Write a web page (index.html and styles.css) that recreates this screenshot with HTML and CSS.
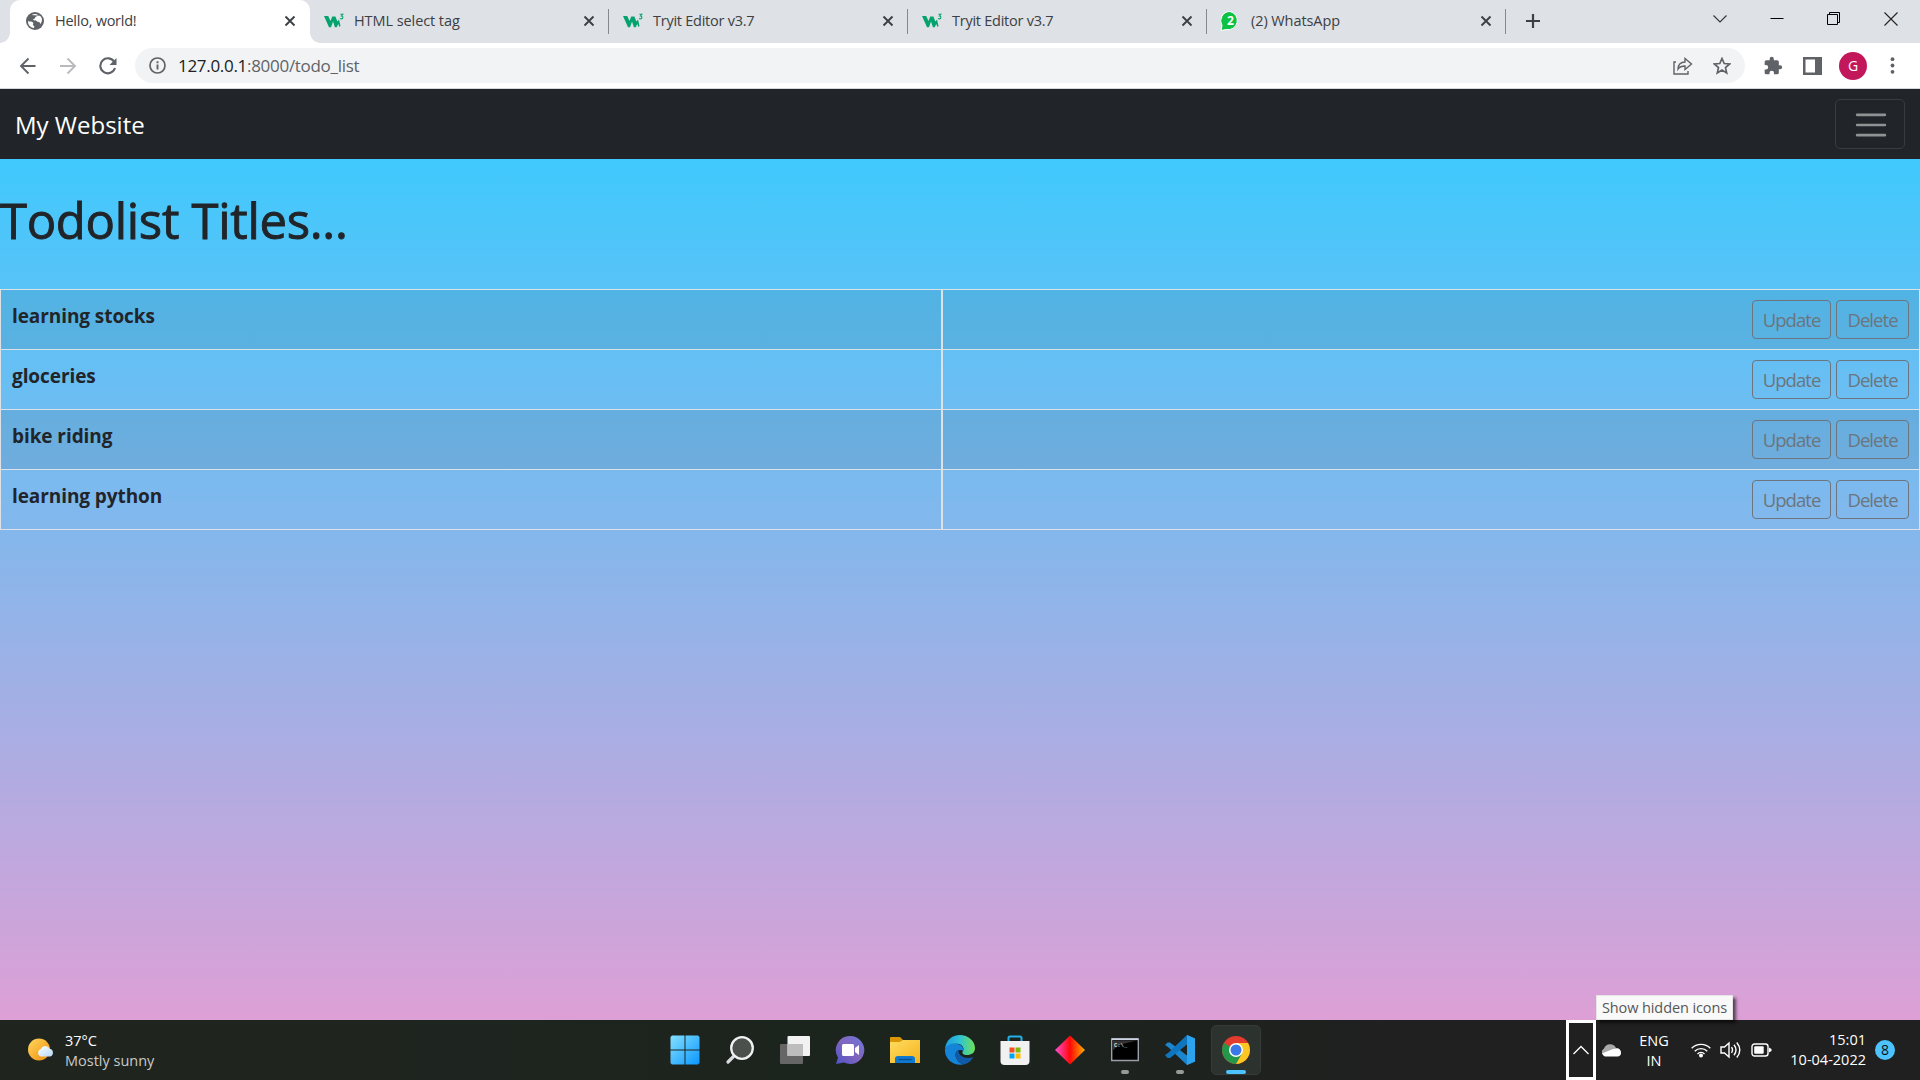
FILE: index.html
```html
<!DOCTYPE html>
<html lang="en">
<head>
<meta charset="utf-8">
<title>Hello, world!</title>
<link rel="stylesheet" href="styles.css">
</head>
<body>
<svg width="0" height="0" class="defs" aria-hidden="true">
  <defs>
    <symbol id="close" viewBox="0 0 12 12"><path d="M1.500 1.500l9 9m0-9l-9 9" stroke="#3c4043" stroke-width="1.900" fill="none"/></symbol>
    <symbol id="w3" viewBox="0 0 20 16"><path d="M0 3h4.200l2.300 5 1.700-4.500h3.200l2 5L15 6.500l1.500 6.500-1 1-1.300-3-1.400 3.200h-1.900L9 8.500 7 14.200H5z" fill="#04a36d"/><path d="M16.400 1.200h2.500L17.500 3c1.900.1 1.900 2.900-.1 2.900-.7 0-1-.3-1.200-.7" fill="none" stroke="#04a36d" stroke-width="1.100"/></symbol>
  </defs>
</svg>

<div class="tabstrip">
  <div class="tab tab-active">
    <svg class="globe" viewBox="0 0 18 18"><circle cx="9" cy="9" r="9" fill="#5f6368"/><path d="M2 9c1 1 4 0 5 1.500s-1 2 .5 3 .5 2 .5 2.600C4 15.500 1.800 12.500 2 9zM5.500 3C7.500 1.600 10 1.700 11.500 2.400c.5 1.600-.8 1.800-1.800 2.400s0 1.700-1.400 1.900-1.500 1.300-.3 1.500 2.600.3 3.200 1.400 2.300 0 2.800 1.400-.8 2-1.200 2.600c4-3 4-7.500 1.200-9.800" fill="#fff"/></svg>
    <span class="tab-title">Hello, world!</span>
    <svg class="tab-close"><use href="#close"/></svg>
  </div>
  <div class="tab">
    <svg class="w3"><use href="#w3"/></svg>
    <span class="tab-title tab-title-wide">HTML select tag</span>
    <svg class="tab-close"><use href="#close"/></svg>
  </div>
  <div class="tab tab-sep">
    <svg class="w3"><use href="#w3"/></svg>
    <span class="tab-title">Tryit Editor v3.7</span>
    <svg class="tab-close"><use href="#close"/></svg>
  </div>
  <div class="tab tab-sep">
    <svg class="w3"><use href="#w3"/></svg>
    <span class="tab-title">Tryit Editor v3.7</span>
    <svg class="tab-close"><use href="#close"/></svg>
  </div>
  <div class="tab tab-sep">
    <svg class="wa" viewBox="0 0 20 20"><path d="M10 .5a9 9 0 1 1-3.800 18L1 19.500l1-5A9.300 9.300 0 0 1 10 .5z" fill="#0dc143" stroke="#fff" stroke-width="1"/><text x="10.500" y="14.200" text-anchor="middle" class="wa-num">2</text></svg>
    <span class="tab-title tab-title-wide">(2) WhatsApp</span>
    <svg class="tab-close"><use href="#close"/></svg>
  </div>
  <div class="newtab">
    <svg width="16" height="16" viewBox="0 0 16 16"><path d="M8 1v14M1 8h14" stroke="#3c4043" stroke-width="2.200"/></svg>
  </div>
  <div class="window-buttons">
    <svg width="14" height="14" viewBox="0 0 14 14"><path d="M.5 3.500L7 10l6.500-6.500" fill="none" stroke="#333" stroke-width="1.100"/></svg>
    <svg width="14" height="14" viewBox="0 0 14 14"><path d="M.5 6.500h13" stroke="#000" stroke-width="1"/></svg>
    <svg width="14" height="14" viewBox="0 0 14 14"><path d="M.5 2.500h10v10h-10zM2.500 2.500V.5h10v10h-2" fill="none" stroke="#000" stroke-width="1"/></svg>
    <svg width="14" height="14" viewBox="0 0 14 14"><path d="M.5.5l13 13m0-13l-13 13" stroke="#222" stroke-width="1.100"/></svg>
  </div>
</div>

<div class="toolbar">
  <div class="nav-buttons">
    <svg width="18" height="18" viewBox="0 0 18 18"><path d="M16.500 9H2m7.500-7.500L2 9l7.500 7.500" fill="none" stroke="#5f6368" stroke-width="1.900"/></svg>
    <svg width="18" height="18" viewBox="0 0 18 18"><path d="M1 9h15M8.500 1.500L16 9l-7.500 7.500" fill="none" stroke="#bababd" stroke-width="1.900"/></svg>
    <svg width="18" height="18" viewBox="0 0 18 18"><path d="M15.300 5A7.500 7.500 0 1 0 16 11" fill="none" stroke="#5f6368" stroke-width="2.100"/><path d="M17.500 1v7h-7z" fill="#5f6368"/></svg>
  </div>
  <div class="omnibox">
    <svg width="17" height="17" viewBox="0 0 17 17"><circle cx="8.500" cy="8.500" r="7.500" fill="none" stroke="#5f6368" stroke-width="1.700"/><path d="M8.500 7.500v5M8.500 4.300v1.900" stroke="#5f6368" stroke-width="1.900"/></svg>
    <span class="url"><b>127.0.0.1</b>:8000/todo_list</span>
    <svg class="share" width="20" height="18" viewBox="0 0 20 18"><path d="M3 5H1v12h14v-3" fill="none" stroke="#5f6368" stroke-width="1.400"/><path d="M5 12c.3-4.500 3-7 7-7V1.500l6.500 5.500L12 12.500V9c-3.500 0-5.500 1-7 3z" fill="none" stroke="#5f6368" stroke-width="1.400"/></svg>
    <svg class="star" width="18" height="18" viewBox="0 0 18 18"><path d="M9 1.500l2.200 5 5.400.5-4.100 3.600 1.200 5.300L9 13.100l-4.700 2.800 1.200-5.300L1.400 7l5.400-.5z" fill="none" stroke="#5f6368" stroke-width="1.700"/></svg>
  </div>
  <div class="actions">
    <svg width="20" height="20" viewBox="0 0 24 24"><path d="M20.500 11H19V7a2 2 0 0 0-2-2h-4V3.500a2.500 2.500 0 0 0-5 0V5H4a2 2 0 0 0-2 2v3.800h1.500a2.700 2.700 0 0 1 0 5.400H2V20a2 2 0 0 0 2 2h3.800v-1.500a2.700 2.700 0 0 1 5.400 0V22H17a2 2 0 0 0 2-2v-4h1.500a2.500 2.500 0 0 0 0-5z" fill="#5f6368"/></svg>
    <svg width="19" height="18" viewBox="0 0 19 18"><path d="M0 0h19v18H0zM2.500 2.500v13H12v-13z" fill="#5f6368" fill-rule="evenodd"/></svg>
    <span class="avatar">G</span>
    <svg width="5" height="17" viewBox="0 0 5 17"><circle cx="2.500" cy="2.200" r="1.900" fill="#5f6368"/><circle cx="2.500" cy="8.500" r="1.900" fill="#5f6368"/><circle cx="2.500" cy="14.800" r="1.900" fill="#5f6368"/></svg>
  </div>
</div>

<main class="page">
  <nav class="navbar">
    <span class="brand">My Website</span>
    <span class="toggler"><svg width="38" height="38" viewBox="0 0 30 30"><path d="M4 7h22M4 15h22M4 23h22" stroke="#919294" stroke-linecap="round" stroke-width="2"/></svg></span>
  </nav>
  <div class="content">
    <h1 class="heading"><span>Todolist Titles...</span></h1>
    <div class="table">
      <div class="row"><div class="cell"><span>learning stocks</span></div><div class="cell cell-actions"><span class="btn btn-u">Update</span><span class="btn btn-d">Delete</span></div></div>
      <div class="row"><div class="cell"><span>gloceries</span></div><div class="cell cell-actions"><span class="btn btn-u">Update</span><span class="btn btn-d">Delete</span></div></div>
      <div class="row"><div class="cell"><span>bike riding</span></div><div class="cell cell-actions"><span class="btn btn-u">Update</span><span class="btn btn-d">Delete</span></div></div>
      <div class="row"><div class="cell"><span>learning python</span></div><div class="cell cell-actions"><span class="btn btn-u">Update</span><span class="btn btn-d">Delete</span></div></div>
    </div>
  </div>
</main>

<footer class="taskbar">
  <div class="weather">
    <svg width="27" height="26" viewBox="0 0 27 26"><defs><linearGradient id="sun" x1="0" y1="0" x2="1" y2="1"><stop offset="0" stop-color="#ffd95e"/><stop offset="1" stop-color="#f08a0c"/></linearGradient><linearGradient id="cl" x1="0" y1="0" x2="1" y2="1"><stop offset="0" stop-color="#fff"/><stop offset="1" stop-color="#b5d8f5"/></linearGradient></defs><circle cx="12" cy="12.500" r="11" fill="url(#sun)"/><path d="M13.500 19.500a4 4 0 0 1 .3-7.500 5 5 0 0 1 9-.2 4 4 0 0 1 .4 7.700z" fill="url(#cl)"/></svg>
    <div class="weather-text"><span>37°C</span><span class="cond">Mostly sunny</span></div>
  </div>
  <div class="apps">
    <div class="app"><svg width="30" height="30" viewBox="0 0 30 30"><defs><linearGradient id="win" x1="0" y1="0" x2="1" y2="1"><stop offset="0" stop-color="#85e0ff"/><stop offset="1" stop-color="#0a97ff"/></linearGradient></defs><path d="M2 .5h12.500v14H.5V2zM15.500.5H28L29.500 2v12.500h-14zM.5 15.500h14v14H2L.5 28zM15.500 15.500h14V28L28 29.500H15.500z" fill="url(#win)"/></svg></div>
    <div class="app"><svg width="30" height="30" viewBox="0 0 30 30"><path d="M8.500 21.500L3 27" stroke="#d8dcdf" stroke-width="3.200" stroke-linecap="round"/><circle cx="17" cy="13" r="10.800" fill="#4b504c" stroke="#eff1f3" stroke-width="2.300"/></svg></div>
    <div class="app"><svg width="30" height="30" viewBox="0 0 30 30"><rect y="9" width="23" height="20" rx="1" fill="#666"/><rect x="7.500" y="1" width="22.500" height="20" rx="1" fill="#f2f2f2"/><path d="M7.500 9H23v12H7.500z" fill="#bdbdbd"/></svg></div>
    <div class="app"><svg width="30" height="30" viewBox="0 0 30 30"><defs><linearGradient id="chat" x1="1" y1="0" x2="0" y2="1"><stop offset="0" stop-color="#6d78de"/><stop offset=".5" stop-color="#8265bd"/><stop offset="1" stop-color="#4d54c8"/></linearGradient></defs><path d="M15 1a14 14 0 1 1-6 26.500L1 29l2-6.500A14 14 0 0 1 15 1z" fill="url(#chat)"/><rect x="7" y="9" width="12" height="12" rx="1.500" fill="#fff"/><path d="M20 13l4-3v10l-4-3z" fill="#fff"/></svg></div>
    <div class="app"><svg width="30" height="30" viewBox="0 0 30 30"><defs><linearGradient id="fold" x1="0" y1="0" x2="1" y2="1"><stop offset="0" stop-color="#ffdc62"/><stop offset="1" stop-color="#f6b31c"/></linearGradient></defs><path d="M0 3q0-1 1-1h9l3 3v5H0z" fill="#dc9709"/><path d="M0 7h10l3-2h17v23H0z" fill="url(#fold)"/><path d="M5 28v-4q0-3 3-3h14q3 0 3 3v4z" fill="#0f79cf"/><path d="M8.500 24.500h13" stroke="#064f93" stroke-width="1.400"/></svg></div>
    <div class="app"><svg width="30" height="30" viewBox="0 0 30 30"><defs><linearGradient id="ed" x1="0" y1="0" x2="1" y2="0"><stop offset="0" stop-color="#1b9de0"/><stop offset=".5" stop-color="#30c2d4"/><stop offset="1" stop-color="#6fe354"/></linearGradient></defs><path d="M0 14C1 5 7 0 15 0s15 6 15 13c0 5-4 7-8 7-4 0-5.500-2-4-4s0-6-4-7c-6-1-11 2-14 5z" fill="url(#ed)"/><path d="M0 14C3 9 8 7.500 13 9c4 1.200 6 4 5 6.500-5-2-9 2-7 7s6 7 9 6.500C9 32-1 24 0 14z" fill="#1484d8"/><path d="M13.500 14.500c-5 3-3 15 6.500 14.500 4-1 7-4 8-7-6 2.500-15 0-14.500-7.500z" fill="#105aa8"/></svg></div>
    <div class="app"><svg width="30" height="30" viewBox="0 0 30 30"><path d="M8.500 7V3q0-1.500 1.500-1.500h10q1.500 0 1.500 1.500v4" stroke="#23b0e6" stroke-width="2" fill="none"/><path d="M.5 6h29v20q0 4-4 4h-21q-4 0-4-4z" fill="#f1f1f1"/><path d="M9.500 12.500h5v5h-5z" fill="#f25022"/><path d="M15.500 12.500h5v5h-5z" fill="#7fba00"/><path d="M9.500 18.500h5v5h-5z" fill="#00a4ef"/><path d="M15.500 18.500h5v5h-5z" fill="#ffb900"/></svg></div>
    <div class="app"><svg width="30" height="30" viewBox="0 0 30 30"><defs><linearGradient id="dia"><stop offset="0" stop-color="#ff4fd8"/><stop offset=".5" stop-color="#ff0808"/><stop offset="1" stop-color="#ffb000"/></linearGradient></defs><path d="M15 .5L30 15 15 29.500 0 15z" fill="url(#dia)"/></svg></div>
    <div class="app"><svg width="30" height="30" viewBox="0 0 30 30"><path d="M1.700 4h26.600v21.500H1.700z" fill="#000" stroke="#9a9ea8" stroke-width="1.400"/><path d="M1.700 4.200h26.600" stroke="#ccd3e4" stroke-width="1.800"/><path d="M2.500 5.500h24C17 8 8 9 2.500 16z" fill="#333"/><text x="4" y="12" class="cmd">C:\_</text></svg><i class="dot"></i></div>
    <div class="app"><svg width="30" height="30" viewBox="0 0 30 30"><path d="M22 0l8 3.500v23L22 30 3 12l-3-2 2.500-2.500L5 7.500l17 13V9.500z" fill="#1b86d0"/><path d="M0 20l2.500 3H5L22 9.500V0L3 18z" fill="#0f75be"/><path d="M22 0l8 3.500v23L22 30z" fill="#2ba3ee"/></svg><i class="dot"></i></div>
    <div class="app app-active"><svg width="28" height="28" viewBox="0 0 28 28"><circle cx="14" cy="14" r="14" fill="#e33b2e"/><path d="M14 14L1.900 7A14 14 0 0 0 14 28l6-10z" fill="#23984a"/><path d="M14 7h12.100A14 14 0 0 1 14 28l6-10.500z" fill="#fdc723"/><circle cx="14" cy="14" r="7" fill="#fff"/><circle cx="14" cy="14" r="5.500" fill="#3b78e7"/></svg><i class="dot dot-on"></i></div>
  </div>
  <div class="tray">
    <div class="chevron"><svg width="16" height="10" viewBox="0 0 16 10"><path d="M.5 9L8 1.500 15.500 9" fill="none" stroke="#fff" stroke-width="1.300"/></svg><span class="tooltip">Show hidden icons</span></div>
    <svg class="cloud" width="20" height="14" viewBox="0 0 20 14"><path d="M4 13a4 4 0 0 1-1-7.500A6.500 6.500 0 0 1 15 5a4 4 0 0 1 1 8z" fill="#a9a9a9"/><path d="M3 13l-2-2.500L12 6c5-1.500 8 0 8 4 0 2-1.500 3.500-3.500 3.500H4z" fill="#fff"/></svg>
    <div class="lang"><span>ENG</span><span>IN</span></div>
    <svg class="wifi" width="20" height="16" viewBox="0 0 20 16"><path d="M.7 6.300a13 13 0 0 1 18.600 0M3.700 9.200a9 9 0 0 1 12.600 0M6.500 12a5 5 0 0 1 7 0" fill="none" stroke="#fff" stroke-width="1.400"/><circle cx="10" cy="13.600" r="2" fill="#fff"/></svg>
    <svg class="sound" width="21" height="18" viewBox="0 0 21 18"><path d="M1 6h3.500L9 2v14l-4.500-4H1z" fill="none" stroke="#fff" stroke-width="1.400"/><path d="M11.500 6.200q2 2.800 0 5.600M14 3.800q4 5.200 0 10.400M16.800 1.500q6 7.500 0 15" fill="none" stroke="#fff" stroke-width="1.400"/></svg>
    <svg class="battery" width="21" height="14" viewBox="0 0 21 14"><rect x="1" y="1" width="16" height="12" rx="2.500" fill="none" stroke="#fff" stroke-width="1.400"/><rect x="3.200" y="3.200" width="9.500" height="7.600" rx="1" fill="#fff"/><path d="M18 4.500l2.500 1.500v2L18 9.500z" fill="#fff"/></svg>
    <div class="clock"><span>15:01</span><span>10-04-2022</span></div>
    <span class="badge">8</span>
  </div>
</footer>
</body>
</html>
```
FILE: styles.css
```css
* { box-sizing: border-box; }
body {
  margin: 0;
  width: 1920px;
  height: 1080px;
  overflow: hidden;
  display: flex;
  flex-direction: column;
  font-family: "Open Sans", "Noto Sans", sans-serif;
  color: #212529;
}
svg { display: block; flex: none; }
.defs { position: absolute; }
span { white-space: nowrap; }

/* Browser tabs */
.tabstrip { height: 43px; background: #dee1e6; display: flex; padding-left: 10px; flex: none; }
.tab { width: 299px; height: 43px; display: flex; align-items: center; padding: 0 14px 2px 14px; position: relative; }
.tab-active { width: 300px; background: #fff; border-radius: 10px 10px 0 0; padding-left: 16px; }
.tab-active::before, .tab-active::after {
  content: ""; position: absolute; bottom: 0; width: 10px; height: 10px;
}
.tab-active::before { left: -10px; background: radial-gradient(circle at 0 0, transparent 9.500px, #fff 10px); }
.tab-active::after { right: -10px; background: radial-gradient(circle at 100% 0, transparent 9.500px, #fff 10px); }
.tab-sep::before, .newtab::before { content: ""; position: absolute; left: -1px; top: 9px; width: 1px; height: 25px; background: #85888d; }
.globe { width: 18px; height: 18px; margin-right: 11px; }
.w3 { width: 20px; height: 16px; margin-right: 10px; }
.wa { width: 20px; height: 20px; margin: 0 11px 0 -1px; }
.wa-num { font: bold 12px "Open Sans", sans-serif; fill: #fff; }
.tab-title { font-size: 14.500px; color: #3c4043; flex: 1; letter-spacing: -0.250px; }
.tab-title-wide { letter-spacing: -0.080px; }
.tab-close { width: 12px; height: 12px; }
.newtab { width: 53px; position: relative; display: flex; align-items: center; justify-content: center; padding-bottom: 1px; }
.window-buttons { margin-left: auto; display: flex; gap: 43px; padding: 12px 22px 0 0; }

/* Address bar */
.toolbar { height: 46px; flex: none; background: #fff; border-bottom: 1px solid #d5d7da; display: flex; align-items: center; padding: 0 25px 0 19px; }
.nav-buttons { display: flex; gap: 22px; width: 116px; }
.omnibox { width: 1610px; height: 35px; border-radius: 18px; background: #f1f3f4; display: flex; align-items: center; padding: 0 14px 0 14px; }
.url { font-size: 17px; margin-left: 12px; color: #5f6368; flex: 1; letter-spacing: -0.300px; }
.url b { font-weight: 400; color: #202124; }
.share { margin-right: 20px; }
.actions { display: flex; align-items: center; margin-left: auto; }
.actions svg:nth-child(1) { margin-right: 20px; }
.avatar { width: 28px; height: 28px; border-radius: 50%; background: #c2185b; color: #fff; font-size: 14px; line-height: 28px; text-align: center; margin: 0 23px 0 17px; }

/* Web page */
.page { flex: 1; background: #fff; display: flex; flex-direction: column; }
.navbar { height: 70px; background: #212529; display: flex; align-items: center; justify-content: space-between; padding: 0 15px; }
.brand { color: #fff; font-size: 24px; line-height: 30px; padding-top: 2px; }
.toggler { width: 70px; height: 50px; border: 1px solid #383b3f; border-radius: 5px; display: flex; align-items: center; justify-content: center; padding: 1px 0 0 1px; }
.content { flex: 1; background: linear-gradient(#40c9fd, #dda0d6); }
.heading { margin: 0; height: 130px; padding-top: 31px; font-size: 49px; line-height: 60px; font-weight: 500; letter-spacing: -0.300px; -webkit-text-stroke: 0.900px #212529; }
.table { border: 1px solid #dee2e6; border-bottom: 0; }
.row { height: 60px; display: flex; border-bottom: 1px solid #dee2e6; }
.row:nth-child(odd) { background: rgba(0, 0, 0, 0.075); }
.cell { width: 940px; padding: 10px 10px 10px 11px; font-size: 19px; line-height: 32px; font-weight: 700; letter-spacing: -0.080px; }
.cell-actions { flex: 1; border-left: 2px solid #dee2e6; display: flex; justify-content: flex-end; gap: 5px; }
.btn { height: 39px; border: 1px solid #6c757d; border-radius: 4px; color: #6c757d; font-weight: 400; font-size: 18.500px; line-height: 38px; text-align: center; letter-spacing: -0.950px; }
.btn-u { width: 79px; }
.btn-d { width: 73px; }

/* Taskbar */
.taskbar { height: 60px; flex: none; background: linear-gradient(90deg, #20241f, #1c241e 50%, #202020 75%); color: #fff; display: grid; grid-template-columns: 660px 1fr 354px; }
.weather { display: flex; align-items: center; padding: 0 0 1px 27px; gap: 11px; }
.weather-text { display: flex; flex-direction: column; font-size: 14.500px; line-height: 20px; padding-top: 2px; }
.cond { color: #c9cac9; }
.apps { display: flex; gap: 5px; align-items: center; }
.app { width: 50px; height: 50px; display: flex; align-items: center; justify-content: center; position: relative; border-radius: 5px; }
.app-active { background: #2c322d; border: 1px solid #363b37; margin-left: 1px; }
.dot { position: absolute; bottom: 1px; left: 21px; width: 8px; height: 4px; border-radius: 2px; background: #999; }
.dot-on { left: 14px; width: 20px; bottom: 0; background: #4cc2ff; }
.tray { display: flex; align-items: center; font-size: 14.500px; line-height: 20px; }
.chevron { width: 30px; height: 60px; border: 3px solid #fff; display: flex; align-items: center; justify-content: center; position: relative; }
.tooltip { position: absolute; left: 27px; top: -28px; width: 137px; height: 25px; background: #f9f9f9; border: 1px solid #e5e5e5; box-shadow: 3px 3px 3px rgba(0, 0, 0, 0.600); color: #575757; font-size: 14.500px; line-height: 23px; text-align: center; letter-spacing: -0.100px; }
.cloud { margin-left: 5px; }
.lang { width: 40px; margin-left: 13px; padding-top: 1px; display: flex; flex-direction: column; align-items: center; }
.wifi { margin-left: 17px; }
.sound { margin-left: 9px; }
.battery { margin-left: 10px; }
.clock { margin-left: auto; display: flex; flex-direction: column; align-items: flex-end; }
.badge { width: 20px; height: 20px; border-radius: 50%; background: #4cc2ff; color: #111; font-size: 14px; text-align: center; margin: 0 25px 0 9px; }
.cmd { font: bold 5.500px "Liberation Mono", monospace; fill: #ddd; }
```
